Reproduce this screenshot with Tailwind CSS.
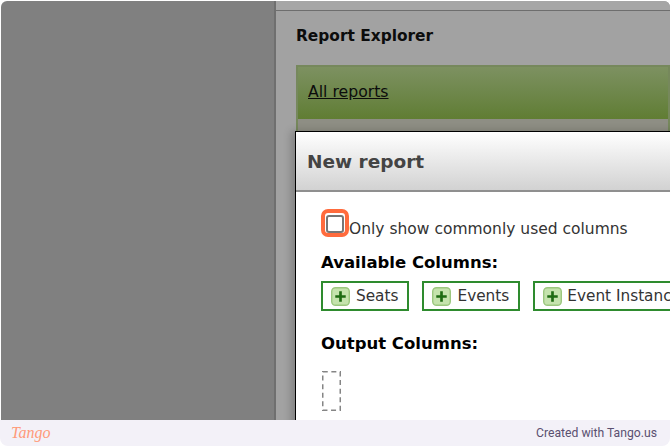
<!DOCTYPE html>
<html lang="en">
<head>
    <meta charset="UTF-8">
    <meta name="viewport" content="width=device-width, initial-scale=1.0">
    <title>New report</title>
    <script src="https://cdn.jsdelivr.net/npm/@tailwindcss/browser@4"></script>
</head>
<body class="bg-white w-[670px] h-[446px] overflow-hidden font-['DejaVu_Sans',sans-serif]">
    <div class="h-[446px] flex flex-col bg-[#f3f1f8] rounded-b-lg overflow-hidden">
        <!-- dimmed page -->
        <div class="h-[420px] flex pl-px pt-px overflow-hidden bg-white">
            <div class="w-[273px] shrink-0 bg-[#808080] rounded-tl-md"></div>
            <div class="relative flex-1 bg-[#a2a2a2] border-l-2 border-[#6f6f6f] rounded-tr-md overflow-hidden">
                <div class="h-[10px] border-b border-[#6e6e6e] bg-[#a6a6a6]"></div>
                <h1 class="pl-[20px] pt-[15px] text-[15.4px] leading-[20px] font-bold text-[#0c0c0c]">Report Explorer</h1>
                <div class="ml-[20px] mt-[19px] h-[67px] border-2 border-b-0 border-[#76885c] bg-[#8e8e84]">
                    <div class="h-[52px] pl-[10px] pt-[13px] bg-gradient-to-b from-[#7d9161] to-[#607d33] text-[15.7px] leading-[24px] text-[#0c0c0c]">
                        <a class="underline">All reports</a>
                    </div>
                </div>

                <!-- modal -->
                <div class="absolute left-[19px] top-[130px] w-[400px] h-[300px] bg-white border-l border-t border-black shadow-[-4px_0_8px_rgba(0,0,0,0.2)]">
                    <div class="h-[60px] pl-[11px] pt-[17px] bg-gradient-to-b from-white to-[#d2d2d2] border-b-2 border-[#8f8f8f] text-[18.5px] leading-[26px] font-bold text-[#444444]">New report</div>
                    <div class="pl-[25px] relative">
                        <label class="flex items-end pt-[21px] h-[46px] text-[15.5px] leading-[20px] text-[#333333]">
                            <span class="w-[18px] h-[18px] ml-[5px] mr-[5px] shrink-0 mb-[5px] bg-white border-2 border-[#767676] rounded-[3px]"></span>
                            <span class="-mb-[1px]">Only show commonly used columns</span>
                        </label>
                        <!-- highlight ring -->
                        <div class="absolute left-[25px] top-[17px] w-[28px] h-[28px] border-[4px] border-[#ff6b3d] rounded-[7px]"></div>

                        <h2 class="mt-[15px] text-[16.5px] leading-[20px] font-bold text-black">Available Columns:</h2>
                        <div class="mt-[8px] flex gap-[13px] w-[420px]">
                            <div class="h-[30px] shrink-0 flex items-center gap-[6px] pl-[8px] pr-[9px] border-2 border-[#2e8b2e] text-[15.3px] text-[#333333]">
                                <svg class="w-[19px] h-[19px] shrink-0" viewBox="0 0 20 20"><rect x="0.75" y="0.75" width="18.5" height="18.5" rx="4" fill="#c5e3ad" stroke="#9cc77f" stroke-width="1.5"/><path d="M10 4.5v11M4.5 10h11" stroke="#1e6b12" stroke-width="2.8"/></svg>
                                <span>Seats</span>
                            </div>
                            <div class="h-[30px] shrink-0 flex items-center gap-[6px] pl-[8px] pr-[9px] border-2 border-[#2e8b2e] text-[15.3px] text-[#333333]">
                                <svg class="w-[19px] h-[19px] shrink-0" viewBox="0 0 20 20"><rect x="0.75" y="0.75" width="18.5" height="18.5" rx="4" fill="#c5e3ad" stroke="#9cc77f" stroke-width="1.5"/><path d="M10 4.5v11M4.5 10h11" stroke="#1e6b12" stroke-width="2.8"/></svg>
                                <span>Events</span>
                            </div>
                            <div class="h-[30px] shrink-0 flex items-center gap-[5px] pl-[8px] pr-[9px] border-2 border-[#2e8b2e] text-[15.3px] text-[#333333]">
                                <svg class="w-[19px] h-[19px] shrink-0" viewBox="0 0 20 20"><rect x="0.75" y="0.75" width="18.5" height="18.5" rx="4" fill="#c5e3ad" stroke="#9cc77f" stroke-width="1.5"/><path d="M10 4.5v11M4.5 10h11" stroke="#1e6b12" stroke-width="2.8"/></svg>
                                <span>Event Instances</span>
                            </div>
                        </div>

                        <h2 class="mt-[23px] text-[16.5px] leading-[20px] font-bold text-black">Output Columns:</h2>
                        <svg class="mt-[17px] ml-px block" width="19" height="40" viewBox="0 0 19 40" fill="none">
                            <rect x="0.75" y="0.75" width="17.5" height="38.5" stroke="#858585" stroke-width="1.5" stroke-dasharray="5 3.6"/>
                        </svg>
                    </div>
                </div>
            </div>
        </div>

        <!-- footer -->
        <div class="h-[26px] shrink-0 flex items-center justify-between pl-[11px] pr-[13px]">
            <span class="font-['Liberation_Serif',serif] italic text-[16px] leading-[24px] text-[#ff9a7a]">Tango</span>
            <span class="font-['Roboto',sans-serif] text-[12.2px] text-[#5a5070]">Created with Tango.us</span>
        </div>
    </div>
</body>
</html>
